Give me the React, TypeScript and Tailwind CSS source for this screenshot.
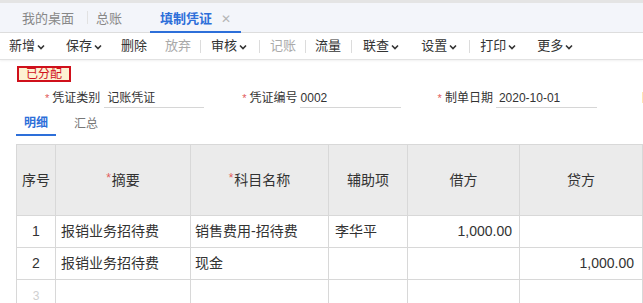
import React from "react";

const font = { fontFamily: '"Liberation Sans", "Noto Sans CJK SC", sans-serif' };

function Chevron() {
  return (
    <svg width="8" height="6" viewBox="0 0 8 6" className="ml-[2px] mt-[1px]">
      <polyline points="1,1.5 4,4.5 7,1.5" fill="none" stroke="#333" strokeWidth="1.6" />
    </svg>
  );
}

function Sep({ ml }: { ml: string }) {
  return <span className={`${ml} h-[13px] w-px bg-[#dcdcdc]`} />;
}

function Star() {
  return <span className="text-[#e25b5b] text-[11px] mr-[3px]">*</span>;
}

const cols = [
  { w: "w-[39px]", label: "序号", req: false },
  { w: "w-[135px]", label: "摘要", req: true },
  { w: "w-[138px]", label: "科目名称", req: true },
  { w: "w-[79px]", label: "辅助项", req: false },
  { w: "w-[112px]", label: "借方", req: false },
  { w: "w-[123px]", label: "贷方", req: false },
];

const rows = [
  ["1", "报销业务招待费", "销售费用-招待费", "李华平", "1,000.00", ""],
  ["2", "报销业务招待费", "现金", "", "", "1,000.00"],
  ["3", "", "", "", "", ""],
];

export default function App() {
  return (
    <div className="w-[643px] h-[303px] overflow-hidden bg-white text-[#333]" style={font}>
      {/* top window tabs */}
      <div className="h-[3px] bg-[#e4e4e4]" />
      <div className="h-[30px] bg-[#f3f5fa] border-b border-[#dedede] flex items-stretch text-[13px]">
        <div className="ml-[22px] flex items-center pt-[3px] text-[#888]">我的桌面</div>
        <div className="ml-[13px] my-[8px] w-px bg-[#e2e2e2]" />
        <div className="ml-[8px] flex items-center pt-[3px] text-[#888]">总账</div>
        <div className="ml-[28px] relative flex items-center pt-[3px] pl-[10px] pr-[10px]">
          <span className="text-[#2d6fd9] font-bold">填制凭证</span>
          <span className="ml-[9px] text-[#b5b5b5] text-[12px] leading-none">✕</span>
          <span className="absolute left-0 right-0 bottom-[-1px] h-[2px] bg-[#2d6fd9]" />
        </div>
      </div>

      {/* toolbar */}
      <div className="h-[27px] border-b border-[#e2e2e2] shadow-[0_1px_2px_rgba(0,0,0,0.06)] flex items-center text-[13px]">
        <span className="ml-[9px] flex items-center">新增<Chevron /></span>
        <span className="ml-[21px] flex items-center">保存<Chevron /></span>
        <span className="ml-[19px]">删除</span>
        <span className="ml-[18px] text-[#aaa]">放弃</span>
        <Sep ml="ml-[9px]" />
        <span className="ml-[10px] flex items-center">审核<Chevron /></span>
        <Sep ml="ml-[12px]" />
        <span className="ml-[10px] text-[#aaa]">记账</span>
        <Sep ml="ml-[9px]" />
        <span className="ml-[9px]">流量</span>
        <Sep ml="ml-[10px]" />
        <span className="ml-[11px] flex items-center">联查<Chevron /></span>
        <span className="ml-[22px] flex items-center">设置<Chevron /></span>
        <Sep ml="ml-[12px]" />
        <span className="ml-[10px] flex items-center">打印<Chevron /></span>
        <span className="ml-[21px] flex items-center">更多<Chevron /></span>
      </div>

      {/* status badge */}
      <div className="mt-[6px] ml-[17px] w-[54px] h-[16px] border-2 border-[#d0101b] bg-[#fdf1d2] flex items-center justify-center text-[12px] text-[#d0101b] leading-none">
        已分配
      </div>

      {/* header fields */}
      <div className="mt-[6px] h-[20px] flex items-stretch text-[12px] whitespace-nowrap">
        <div className="ml-[45px] shrink-0 flex items-center">
          <Star />
          <span>凭证类别</span>
        </div>
        <div className="ml-[4px] shrink-0 w-[100px] border-b border-[#d6d6d6] flex items-center pl-[3px]">记账凭证</div>
        <div className="ml-[38px] shrink-0 flex items-center">
          <Star />
          <span>凭证编号</span>
        </div>
        <div className="ml-[2px] shrink-0 w-[101px] border-b border-[#d6d6d6] flex items-center pl-[1px]">0002</div>
        <div className="ml-[37px] shrink-0 flex items-center">
          <Star />
          <span>制单日期</span>
        </div>
        <div className="ml-[3px] shrink-0 w-[101px] border-b border-[#d6d6d6] flex items-center pl-[3px]">2020-10-01</div>
        <div className="ml-[45px] shrink-0 flex items-center text-[#333]">附</div>
      </div>

      {/* detail tabs */}
      <div className="flex text-[12px]">
        <div className="ml-[16px] w-[40px] h-[28px] pt-[4px] flex items-center justify-center border-b-2 border-[#2d6fd9] text-[#2d6fd9] font-semibold">
          明细
        </div>
        <div className="ml-[18px] h-[28px] pt-[4px] flex items-center text-[#777]">汇总</div>
      </div>

      {/* table */}
      <div className="mt-[8px] ml-[16px] w-[627px] border-t border-l border-[#d8d8d8] text-[14px]">
        <div className="flex h-[71px] bg-[#ebebeb]">
          {cols.map((c, i) => (
            <div
              key={i}
              className={`${c.w} shrink-0 border-r border-b border-[#d8d8d8] flex items-center justify-center`}
            >
              {c.req && <span className="text-[#e25b5b] text-[12px] mr-[1px] -mt-[4px]">*</span>}
              {c.label}
            </div>
          ))}
        </div>
        {rows.map((r, ri) => (
          <div key={ri} className="flex h-[32px]">
            <div className={`w-[39px] shrink-0 border-r border-b border-[#d8d8d8] flex items-center justify-center ${ri === 2 ? "text-[#d0d0d0] text-[12px]" : ""}`}>
              {r[0]}
            </div>
            <div className="w-[135px] shrink-0 border-r border-b border-[#d8d8d8] flex items-center pl-[5px]">{r[1]}</div>
            <div className="w-[138px] shrink-0 border-r border-b border-[#d8d8d8] flex items-center pl-[4px]">{r[2]}</div>
            <div className="w-[79px] shrink-0 border-r border-b border-[#d8d8d8] flex items-center pl-[6px]">{r[3]}</div>
            <div className="w-[112px] shrink-0 border-r border-b border-[#d8d8d8] flex items-center justify-end pr-[7px]">{r[4]}</div>
            <div className="w-[123px] shrink-0 border-r border-b border-[#d8d8d8] flex items-center justify-end pr-[8px]">{r[5]}</div>
          </div>
        ))}
      </div>
    </div>
  );
}
